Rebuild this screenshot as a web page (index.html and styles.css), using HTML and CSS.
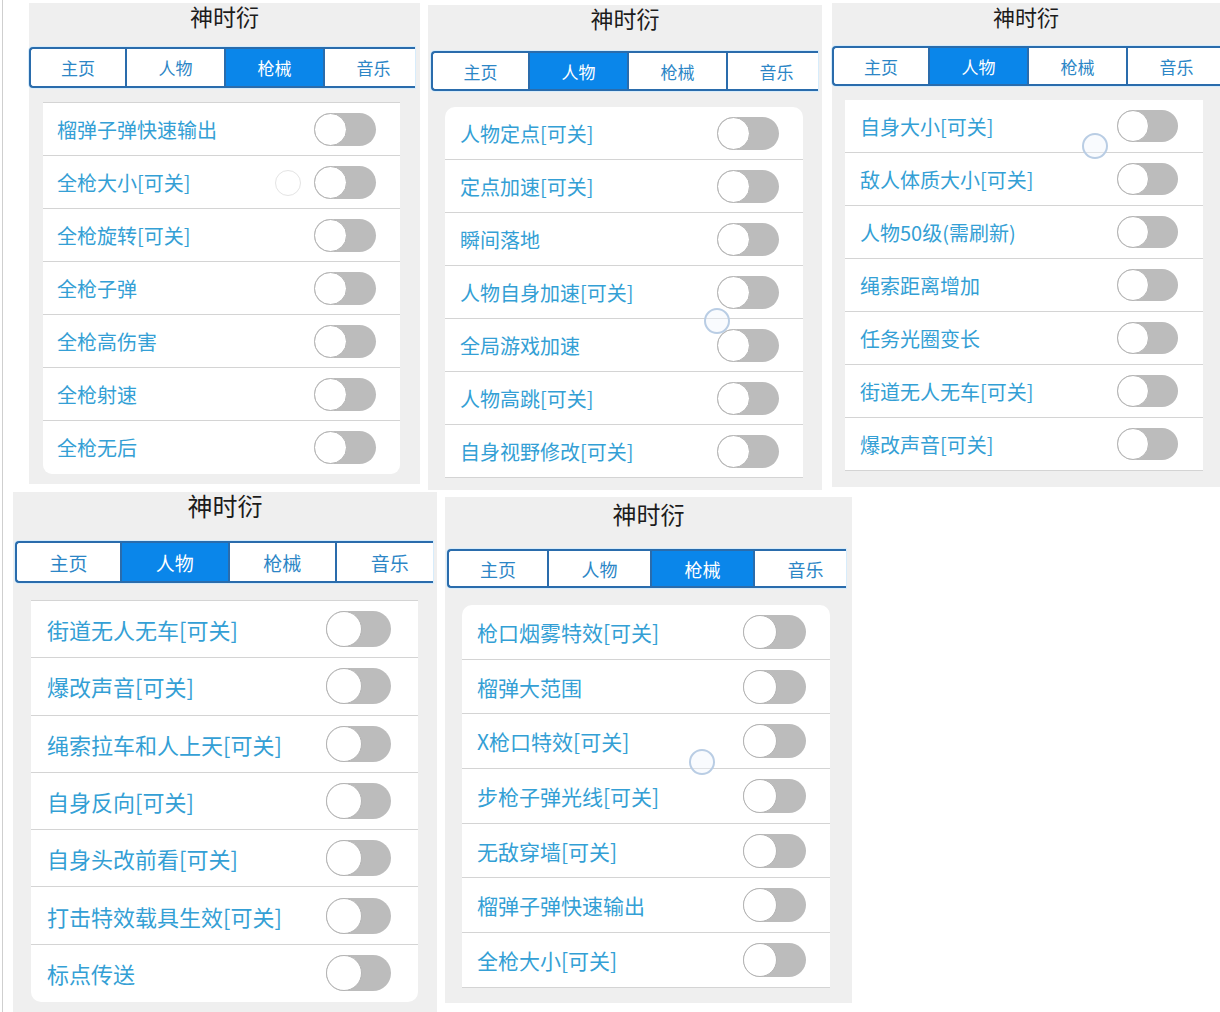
FILE: index.html
```html
<!DOCTYPE html>
<html lang="zh">
<head>
    <meta charset="UTF-8">
    <meta name="viewport" content="width=device-width, initial-scale=1.0">
    <title>神时衍</title>
    <link rel="stylesheet" href="styles.css">
</head>
<body>
<div id="board">

    <!-- 1: 枪械 -->
    <div class="panel p1">
        <div class="title">神时衍</div>
        <div class="tabs">
            <div class="tab">主页</div>
            <div class="tab">人物</div>
            <div class="tab on">枪械</div>
            <div class="tab">音乐</div>
        </div>
        <div class="card">
            <div class="row"><span>榴弹子弹快速输出</span><i class="sw"></i></div>
            <div class="row"><span>全枪大小[可关]</span><i class="sw"></i></div>
            <div class="row"><span>全枪旋转[可关]</span><i class="sw"></i></div>
            <div class="row"><span>全枪子弹</span><i class="sw"></i></div>
            <div class="row"><span>全枪高伤害</span><i class="sw"></i></div>
            <div class="row"><span>全枪射速</span><i class="sw"></i></div>
            <div class="row"><span>全枪无后</span><i class="sw"></i></div>
        </div>
        <div class="touch faint" style="left: 246px; top: 167px;"></div>
    </div>

    <!-- 2: 人物 -->
    <div class="panel p2">
        <div class="title">神时衍</div>
        <div class="tabs">
            <div class="tab">主页</div>
            <div class="tab on">人物</div>
            <div class="tab">枪械</div>
            <div class="tab">音乐</div>
        </div>
        <div class="card">
            <div class="row"><span>人物定点[可关]</span><i class="sw"></i></div>
            <div class="row"><span>定点加速[可关]</span><i class="sw"></i></div>
            <div class="row"><span>瞬间落地</span><i class="sw"></i></div>
            <div class="row"><span>人物自身加速[可关]</span><i class="sw"></i></div>
            <div class="row"><span>全局游戏加速</span><i class="sw"></i></div>
            <div class="row"><span>人物高跳[可关]</span><i class="sw"></i></div>
            <div class="row"><span>自身视野修改[可关]</span><i class="sw"></i></div>
        </div>
        <div class="touch" style="left: 276px; top: 303px;"></div>
    </div>

    <!-- 3: 人物 -->
    <div class="panel p3">
        <div class="title">神时衍</div>
        <div class="tabs">
            <div class="tab">主页</div>
            <div class="tab on">人物</div>
            <div class="tab">枪械</div>
            <div class="tab">音乐</div>
        </div>
        <div class="card">
            <div class="row"><span>自身大小[可关]</span><i class="sw"></i></div>
            <div class="row"><span>敌人体质大小[可关]</span><i class="sw"></i></div>
            <div class="row"><span>人物50级(需刷新)</span><i class="sw"></i></div>
            <div class="row"><span>绳索距离增加</span><i class="sw"></i></div>
            <div class="row"><span>任务光圈变长</span><i class="sw"></i></div>
            <div class="row"><span>街道无人无车[可关]</span><i class="sw"></i></div>
            <div class="row"><span>爆改声音[可关]</span><i class="sw"></i></div>
        </div>
        <div class="touch" style="left: 250px; top: 130px;"></div>
    </div>

    <!-- 4: 人物 -->
    <div class="panel p4">
        <div class="title">神时衍</div>
        <div class="tabs">
            <div class="tab">主页</div>
            <div class="tab on">人物</div>
            <div class="tab">枪械</div>
            <div class="tab">音乐</div>
        </div>
        <div class="card">
            <div class="row"><span>街道无人无车[可关]</span><i class="sw"></i></div>
            <div class="row"><span>爆改声音[可关]</span><i class="sw"></i></div>
            <div class="row"><span>绳索拉车和人上天[可关]</span><i class="sw"></i></div>
            <div class="row"><span>自身反向[可关]</span><i class="sw"></i></div>
            <div class="row"><span>自身头改前看[可关]</span><i class="sw"></i></div>
            <div class="row"><span>打击特效载具生效[可关]</span><i class="sw"></i></div>
            <div class="row"><span>标点传送</span><i class="sw"></i></div>
        </div>
    </div>

    <!-- 5: 枪械 -->
    <div class="panel p5">
        <div class="title">神时衍</div>
        <div class="tabs">
            <div class="tab">主页</div>
            <div class="tab">人物</div>
            <div class="tab on">枪械</div>
            <div class="tab">音乐</div>
        </div>
        <div class="card">
            <div class="row"><span>枪口烟雾特效[可关]</span><i class="sw"></i></div>
            <div class="row"><span>榴弹大范围</span><i class="sw"></i></div>
            <div class="row"><span>X枪口特效[可关]</span><i class="sw"></i></div>
            <div class="row"><span>步枪子弹光线[可关]</span><i class="sw"></i></div>
            <div class="row"><span>无敌穿墙[可关]</span><i class="sw"></i></div>
            <div class="row"><span>榴弹子弹快速输出</span><i class="sw"></i></div>
            <div class="row"><span>全枪大小[可关]</span><i class="sw"></i></div>
        </div>
        <div class="touch" style="left: 244px; top: 252px;"></div>
    </div>

</div>
</body>
</html>
```

FILE: styles.css
```css
* {
    box-sizing: border-box;
    font-family: "Noto Sans CJK SC", "Noto Sans", sans-serif;
}

body {
    margin: 0;
    background: linear-gradient(to right, #fff 2px, #cfcfcf 2px, #cfcfcf 3px, #fff 3px);
}

#board {
    position: relative;
    width: 1220px;
    height: 1012px;
    overflow: hidden;
}

/* each screenshot sits on the collage at its own place and scale */
.panel {
    position: absolute;
    background: #efefef;
}

.title {
    text-align: center;
    color: #1c1c1c;
}

.tabs {
    display: flex;
    overflow: hidden;
    background: #fff;
    border: 2px solid #2a6cac;
    border-right: none;
    border-radius: 4px 0 0 4px;
    box-shadow: 0 0 0 1px #d7ecfb;
}

.tab {
    flex: 0 0 auto;
    display: flex;
    align-items: center;
    justify-content: center;
    color: #2c86c6;
    border-left: 2px solid #2a6cac;
}

.tab:first-child {
    border-left: none;
}

.tab.on {
    background: #0a86ea;
    color: #fff;
}

.card {
    background: #fff;
}

.row {
    display: flex;
    align-items: center;
    justify-content: space-between;
    border-bottom: 1px solid #d4d4d4;
    color: #349fd5;
}

.sw {
    position: relative;
    display: block;
    background: #bcbcbc;
    border-radius: 20px;
}

.sw::before {
    content: "";
    position: absolute;
    left: 0;
    top: 0;
    box-sizing: border-box;
    background: #fff;
    border: 1px solid #b4b4b4;
    border-radius: 50%;
}

.touch {
    position: absolute;
    width: 26px;
    height: 26px;
    border-radius: 50%;
    border: 2px solid #b9cde4;
    background: rgba(240, 246, 252, 0.4);
}

.touch.faint {
    border: 1px solid #e4e4e4;
    background: none;
}

/* panel 1 */
.p1 { left: 29px; top: 3px; width: 391px; height: 481px; }
.p1 .title { height: 44px; line-height: 26px; font-size: 23px; }
.p1 .tabs { height: 41px; width: 386px; }
.p1 .tab { width: 99px; font-size: 17px; }
.p1 .tab:first-child { width: 94px; }
.p1 .card { margin: 14px 0 0 14px; width: 357px; border-top: 1px solid #d4d4d4; border-radius: 0 0 9px 9px; }
.p1 .row { height: 53px; padding: 0 24px 0 14px; font-size: 20px; }
.p1 .row:last-child { border-bottom: none; }
.p1 .sw { width: 62px; height: 33px; }
.p1 .sw::before { width: 33px; height: 33px; }

/* panel 2 */
.p2 { left: 428px; top: 5px; width: 394px; height: 485px; }
.p2 .title { height: 46px; line-height: 26px; font-size: 23px; }
.p2 .tabs { height: 40px; width: 387px; margin-left: 3px; }
.p2 .tab { width: 99px; font-size: 17px; }
.p2 .tab:first-child { width: 95px; }
.p2 .card { margin: 16px 0 0 17px; width: 358px; border-radius: 10px 10px 0 0; }
.p2 .row { height: 53px; padding: 0 24px 0 15px; font-size: 20px; }
.p2 .sw { width: 62px; height: 33px; }
.p2 .sw::before { width: 33px; height: 33px; }

/* panel 3 */
.p3 { left: 832px; top: 3px; width: 388px; height: 484px; }
.p3 .title { height: 43px; line-height: 26px; font-size: 22px; }
.p3 .tabs { height: 40px; width: 388px; }
.p3 .tab { width: 99px; font-size: 17px; }
.p3 .tab:first-child { width: 94px; }
.p3 .card { margin: 14px 0 0 13px; width: 358px; }
.p3 .row { height: 53px; padding: 0 25px 0 15px; font-size: 20px; }
.p3 .sw { width: 61px; height: 32px; }
.p3 .sw::before { width: 32px; height: 32px; }

/* panel 4 */
.p4 { left: 13px; top: 492px; width: 424px; height: 520px; }
.p4 .title { height: 49px; line-height: 26px; font-size: 25px; }
.p4 .tabs { height: 42px; width: 418px; margin-left: 2px; }
.p4 .tab { width: 107.5px; font-size: 19px; }
.p4 .tab:first-child { width: 103px; }
.p4 .card { margin: 17px 0 0 18px; width: 387px; border-top: 1px solid #d4d4d4; border-radius: 0 0 10px 10px; }
.p4 .row { height: 57.3px; padding: 0 27px 0 16px; font-size: 22px; }
.p4 .row:last-child { border-bottom: none; }
.p4 .sw { width: 65px; height: 36px; }
.p4 .sw::before { width: 36px; height: 36px; }

/* panel 5 */
.p5 { left: 445px; top: 497px; width: 407px; height: 506px; }
.p5 .title { height: 52px; line-height: 34px; font-size: 24px; }
.p5 .tabs { height: 39px; width: 399px; margin-left: 2px; }
.p5 .tab { width: 103px; font-size: 18px; }
.p5 .tab:first-child { width: 98px; }
.p5 .card { margin: 17px 0 0 17px; width: 368px; border-radius: 10px 10px 0 0; }
.p5 .row { height: 54.7px; padding: 0 24px 0 15px; font-size: 21px; }
.p5 .sw { width: 63px; height: 34px; }
.p5 .sw::before { width: 34px; height: 34px; }
```
